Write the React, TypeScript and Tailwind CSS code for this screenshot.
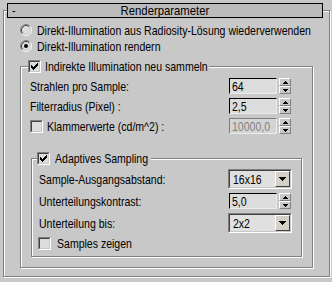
import React from "react";

function T({ children, center }: { children: React.ReactNode; center?: boolean }) {
  return (
    <span
      className={
        center
          ? "inline-block whitespace-nowrap origin-center scale-x-[0.87]"
          : "inline-block whitespace-nowrap origin-left scale-x-[0.81]"
      }
    >
      {children}
    </span>
  );
}

function Checkbox({ checked }: { checked?: boolean }) {
  return (
    <div className="w-[13px] h-[13px] shrink-0 border border-t-[#808080] border-l-[#808080] border-b-white border-r-white">
      <div className="relative w-full h-full border border-t-[#404040] border-l-[#404040] border-b-[#c8c8c8] border-r-[#c8c8c8] bg-[#dcdcdc]">
        {checked && (
          <svg className="absolute left-0 top-0" width="9" height="9" viewBox="0 0 9 9">
            <rect x="1" y="3" width="1" height="3" fill="#000" />
            <rect x="2" y="4" width="1" height="3" fill="#000" />
            <rect x="3" y="5" width="1" height="3" fill="#000" />
            <rect x="4" y="4" width="1" height="3" fill="#000" />
            <rect x="5" y="3" width="1" height="3" fill="#000" />
            <rect x="6" y="2" width="1" height="3" fill="#000" />
            <rect x="7" y="1" width="1" height="3" fill="#000" />
          </svg>
        )}
      </div>
    </div>
  );
}

function Radio({ checked }: { checked?: boolean }) {
  return (
    <svg width="12" height="12" viewBox="0 0 12 12" className="shrink-0">
      <circle cx="6" cy="6" r="4.5" fill="#dcdcdc" />
      <path d="M2.11 9.89 A5.5 5.5 0 0 1 9.89 2.11" fill="none" stroke="#808080" strokeWidth="1" />
      <path d="M9.89 2.11 A5.5 5.5 0 0 1 2.11 9.89" fill="none" stroke="#ffffff" strokeWidth="1" />
      <path d="M2.82 9.18 A4.5 4.5 0 0 1 9.18 2.82" fill="none" stroke="#404040" strokeWidth="1" />
      <path d="M9.18 2.82 A4.5 4.5 0 0 1 2.82 9.18" fill="none" stroke="#c8c8c8" strokeWidth="1" />
      {checked && <circle cx="6" cy="6" r="2" fill="#000" />}
    </svg>
  );
}

function SpinButton() {
  return (
    <div className="w-[12px] h-[16px] flex flex-col shrink-0">
      <div className="h-[8px] border border-t-white border-l-white border-b-[#808080] border-r-[#808080] bg-[#c8c8c8] flex items-center justify-center">
        <svg width="5" height="3" viewBox="0 0 5 3">
          <rect x="2" y="0" width="1" height="1" fill="#000" />
          <rect x="1" y="1" width="3" height="1" fill="#000" />
          <rect x="0" y="2" width="5" height="1" fill="#000" />
        </svg>
      </div>
      <div className="h-[8px] border border-t-white border-l-white border-b-[#808080] border-r-[#808080] bg-[#c8c8c8] flex items-center justify-center">
        <svg width="5" height="3" viewBox="0 0 5 3">
          <rect x="0" y="0" width="5" height="1" fill="#000" />
          <rect x="1" y="1" width="3" height="1" fill="#000" />
          <rect x="2" y="2" width="1" height="1" fill="#000" />
        </svg>
      </div>
    </div>
  );
}

function Spinner({ value, disabled }: { value: string; disabled?: boolean }) {
  return (
    <div className="flex items-center gap-[2px] shrink-0">
      <div
        className={
          disabled
            ? "w-[48px] h-[16px] overflow-hidden border border-t-[#808080] border-l-[#808080] border-b-[#ececec] border-r-[#ececec] bg-[#d4d4d4] pl-[2px] flex items-center text-[#808080]"
            : "w-[48px] h-[16px] overflow-hidden border border-t-black border-l-black border-b-[#ececec] border-r-[#ececec] bg-[#dcdcdc] pl-[2px] flex items-center"
        }
      >
        <T>{value}</T>
      </div>
      <SpinButton />
    </div>
  );
}

function Dropdown({ value }: { value: string }) {
  return (
    <div className="w-[64px] h-[20px] shrink-0 border border-t-[#808080] border-l-[#808080] border-b-white border-r-white">
      <div className="h-full flex border border-t-[#404040] border-l-[#404040] border-b-[#c8c8c8] border-r-[#c8c8c8] bg-[#e0e0e0]">
        <div className="flex-1 pl-[3px] flex items-center">
          <T>{value}</T>
        </div>
        <div className="w-[15px] h-full border border-t-white border-l-white border-b-[#404040] border-r-[#404040] bg-[#d4d0c8] flex items-center justify-center">
          <svg width="7" height="4" viewBox="0 0 7 4">
            <rect x="0" y="0" width="7" height="1" fill="#000" />
            <rect x="1" y="1" width="5" height="1" fill="#000" />
            <rect x="2" y="2" width="3" height="1" fill="#000" />
            <rect x="3" y="3" width="1" height="1" fill="#000" />
          </svg>
        </div>
      </div>
    </div>
  );
}

export default function App() {
  return (
    <div className="w-[332px] h-[282px] bg-[#c8c8c8] pt-[3px] overflow-hidden text-black text-[13px] leading-[15px] font-['Liberation_Sans',Arial,sans-serif]">
      {/* header */}
      <div className="relative z-10 ml-[7px] w-[316px] h-[15px] border border-black bg-[#bcbcbc] grid grid-cols-[20px_1fr_20px] items-center">
        <span className="pl-[4px] leading-none">
          <T>-</T>
        </span>
        <span className="text-center leading-none">
          <T center>Renderparameter</T>
        </span>
        <span />
      </div>

      {/* rollout frame */}
      <div className="-mt-[8px] ml-[3px] w-[327px] border border-[#808080] shadow-[inset_1px_1px_0_#fff,1px_1px_0_#fff] pt-[11px] pl-[16px] pb-[8px]">
        <div className="h-[16px] flex items-center gap-[5px] whitespace-nowrap">
          <Radio />
          <T>Direkt-Illumination aus Radiosity-Lösung wiederverwenden</T>
        </div>
        <div className="h-[16px] flex items-center gap-[5px] whitespace-nowrap">
          <Radio checked />
          <T>Direkt-Illumination rendern</T>
        </div>

        {/* outer group */}
        <div className="mt-[12px] w-[293px] border border-[#808080] shadow-[inset_1px_1px_0_#fff,1px_1px_0_#fff] flex flex-col pb-[10px]">
          <div className="-mt-[7px] ml-[7px] self-start h-[13px] flex items-center gap-[4px] bg-[#c8c8c8]">
            <Checkbox checked />
            <span className="w-[164px] overflow-visible">
              <T>Indirekte Illumination neu sammeln</T>
            </span>
          </div>

          <div className="mt-[5px] h-[16px] flex items-center pl-[9px] pr-[21px]">
            <span className="flex-1 min-w-0">
              <T>Strahlen pro Sample:</T>
            </span>
            <Spinner value="64" />
          </div>
          <div className="mt-[4px] h-[16px] flex items-center pl-[9px] pr-[21px]">
            <span className="flex-1 min-w-0">
              <T>Filterradius (Pixel) :</T>
            </span>
            <Spinner value="2,5" />
          </div>
          <div className="mt-[4px] h-[16px] flex items-center gap-[4px] pl-[9px] pr-[21px]">
            <Checkbox />
            <span className="flex-1 min-w-0">
              <T>Klammerwerte (cd/m^2) :</T>
            </span>
            <Spinner value="10000,0" disabled />
          </div>

          {/* inner group */}
          <div className="mt-[24px] ml-[10px] w-[271px] border border-[#808080] shadow-[inset_1px_1px_0_#fff,1px_1px_0_#fff] flex flex-col pb-[6px]">
            <div className="-mt-[7px] ml-[5px] self-start h-[13px] flex items-center gap-[5px] bg-[#c8c8c8]">
              <Checkbox checked />
              <span className="w-[96px]">
                <T>Adaptives Sampling</T>
              </span>
            </div>
            <div className="mt-[4px] h-[20px] flex items-center pl-[7px] pr-[9px]">
              <span className="flex-1 min-w-0">
                <T>Sample-Ausgangsabstand:</T>
              </span>
              <Dropdown value="16x16" />
            </div>
            <div className="mt-[4px] h-[16px] flex items-center pl-[7px] pr-[10px]">
              <span className="flex-1 min-w-0">
                <T>Unterteilungskontrast:</T>
              </span>
              <Spinner value="5,0" />
            </div>
            <div className="mt-[4px] h-[20px] flex items-center pl-[7px] pr-[9px]">
              <span className="flex-1 min-w-0">
                <T>Unterteilung bis:</T>
              </span>
              <Dropdown value="2x2" />
            </div>
            <div className="mt-[4px] h-[13px] flex items-center gap-[6px] pl-[6px]">
              <Checkbox />
              <T>Samples zeigen</T>
            </div>
          </div>
        </div>
      </div>
    </div>
  );
}
